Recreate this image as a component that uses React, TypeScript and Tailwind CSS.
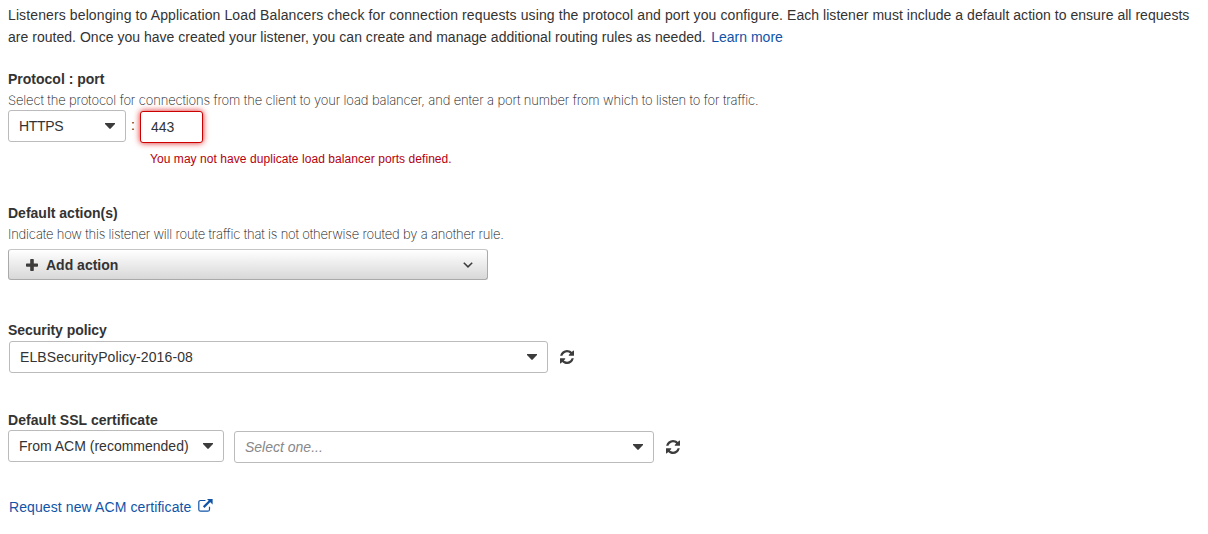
import type { ReactNode } from "react";

function RefreshIcon() {
  return (
    <svg viewBox="0 0 1536 1536" className="h-[14px] w-[14px] shrink-0 fill-[#3c3c3c]" aria-hidden="true">
      <path d="M1511 928q0 5-1 7-64 268-268 434.5T764 1536q-146 0-282.5-55T238 1324l-129 129q-19 19-45 19t-45-19-19-45V960q0-26 19-45t45-19h448q26 0 45 19t19 45-19 45l-137 137q71 66 161 102t187 36q134 0 250-65t186-179q11-17 53-117 8-23 30-23h192q13 0 22.500 9.500t9.500 22.500zm25-800v448q0 26-19 45t-45 19h-448q-26 0-45-19t-19-45 19-45l138-138Q969 256 768 256q-134 0-250 65T332 500q-11 17-53 117-8 23-30 23H50q-13 0-22.500-9.500T18 608v-7q65-268 270-434.500T768 0q146 0 284 55.500T1297 212l130-129q19-19 45-19t45 19 19 45z" />
    </svg>
  );
}

function PlusIcon() {
  return (
    <svg viewBox="0 0 12 12" className="h-3 w-3 shrink-0 fill-[#3c3c3c]" aria-hidden="true">
      <path d="M4.900 0h2.200q.7 0 .7.700v3.700h3.500q.7 0 .7.700v1.900q0 .7-.7.700H7.800v3.600q0 .7-.7.700H4.900q-.7 0-.7-.7V7.700H.7Q0 7.700 0 7V5.100q0-.7.700-.7h3.500V.7q0-.7.700-.7z" />
    </svg>
  );
}

function ExternalIcon() {
  return (
    <svg viewBox="0 0 15 14" className="h-[14px] w-[15px] shrink-0" fill="none" aria-hidden="true">
      <path d="M7.500 1.500H2.600Q.8 1.500 .8 3.300v7.100q0 1.800 1.800 1.800h7.100q1.800 0 1.800-1.800V7.700" stroke="#1054a8" strokeWidth="1.200" />
      <path d="M5.700 8.100l6.100-6.100" stroke="#1054a8" strokeWidth="2.200" />
      <path d="M9 0h5.600v5.600z" fill="#1054a8" />
    </svg>
  );
}

function Caret() {
  return (
    <svg viewBox="0 0 10 6" className="h-[6px] w-[10px] shrink-0 fill-[#3c3c3c]" aria-hidden="true">
      <path d="M0 0h10v1L5.700 5.600q-.7.600-1.400 0L0 1z" />
    </svg>
  );
}

function Select({ className, children }: { className: string; children: ReactNode }) {
  return (
    <button
      type="button"
      className={`flex h-8 items-center justify-between rounded-[3px] border border-[#bbb] bg-white pr-[10px] pl-[10px] text-left ${className}`}
    >
      {children}
      <Caret />
    </button>
  );
}

function Label({ className = "", children }: { className?: string; children: ReactNode }) {
  return <div className={`h-[21px] leading-5 font-bold ${className}`}>{children}</div>;
}

function Hint({ className, children }: { className: string; children: ReactNode }) {
  return (
    <p className={`h-5 font-['Inter','Liberation_Sans',sans-serif] text-[13px] leading-5 font-extralight text-[#111] ${className}`}>
      {children}
    </p>
  );
}

export default function App() {
  return (
    <main className="h-[534px] overflow-hidden bg-white pt-1 pl-2 font-['Liberation_Sans',Arial,sans-serif] text-[14px] whitespace-nowrap text-[#333]">
      <div className="leading-[22px]">
        <p className="tracking-[0.114px]">
          Listeners belonging to Application Load Balancers check for connection requests using the protocol and port you
          configure.{" "}
          <span className="tracking-[0.035px]">
            Each listener must include a default action to ensure all requests
          </span>
        </p>
        <p className="flex gap-[5.500px]">
          <span className="tracking-[0.025px]">
            are routed. Once you have created your listener, you can create and manage additional routing rules as needed.
          </span>
          <a className="text-[#1054a8]">Learn more</a>
        </p>
      </div>

      <section className="mt-[21px] h-[134px]">
        <Label>Protocol : port</Label>
        <Hint className="tracking-[-0.137px]">
          Select the protocol for connections from the client to your load balancer, and enter a port number from which
          to listen to for traffic.
        </Hint>
        <div className="flex h-[33px] items-start">
          <Select className="w-[118px]">
            <span className="tracking-[-0.3px]">HTTPS</span>
          </Select>
          <span className="w-[14px] pl-[5px] leading-[30px]">:</span>
          <input
            defaultValue="443"
            className="mt-px h-8 w-[63px] rounded-[3px] border border-[#c00] bg-white pl-[10px] shadow-[0_0_6px_#dd2020] outline-none"
          />
        </div>
        <p className="mt-[6px] pl-[142px] text-[12px] leading-5 tracking-[0.06px] text-[#b5000f]">
          You may not have duplicate load balancer ports defined.
        </p>
      </section>

      <section className="h-[117px]">
        <Label>Default action(s)</Label>
        <Hint className="tracking-[-0.18px]">
          Indicate how this listener will route traffic that is not otherwise routed by a another rule.
        </Hint>
        <button
          type="button"
          className="mt-[5px] flex h-[31px] w-[480px] items-center rounded-[3px] border border-[#aaa] border-t-[#c6c6c6] bg-linear-to-b from-white to-[#d8d8d8] pr-[14px] pl-[17px] font-bold"
        >
          <PlusIcon />
          <span className="ml-2 pt-[2px]">Add action</span>
          <svg viewBox="0 0 10 6" className="ml-auto h-[6px] w-[10px]" fill="none" aria-hidden="true">
            <path d="M.8.700L5 4.900 9.200.700" stroke="#3c3c3c" strokeWidth="1.500" />
          </svg>
        </button>
      </section>

      <section className="h-[89px]">
        <Label className="tracking-[-0.05px]">Security policy</Label>
        <div className="flex items-center gap-[12px] pl-px">
          <Select className="w-[539px]">
            <span className="tracking-[0.1px]">ELBSecurityPolicy-2016-08</span>
          </Select>
          <RefreshIcon />
        </div>
      </section>

      <section className="h-[88px]">
        <Label className="pt-px tracking-[0.06px]">Default SSL certificate</Label>
        <div className="flex items-start">
          <Select className="w-[216px]">
            <span>From ACM (recommended)</span>
          </Select>
          <div className="mt-px ml-[10px] flex items-center gap-[12px]">
            <Select className="w-[420px]">
              <span className="text-[#888] italic">Select one...</span>
            </Select>
            <RefreshIcon />
          </div>
        </div>
      </section>

      <a className="flex h-5 items-start gap-[7px] pl-px leading-5 text-[#1054a8]">
        <span className="tracking-[0.1px]">Request new ACM certificate</span>
        <span className="pt-[2px]">
          <ExternalIcon />
        </span>
      </a>
    </main>
  );
}
